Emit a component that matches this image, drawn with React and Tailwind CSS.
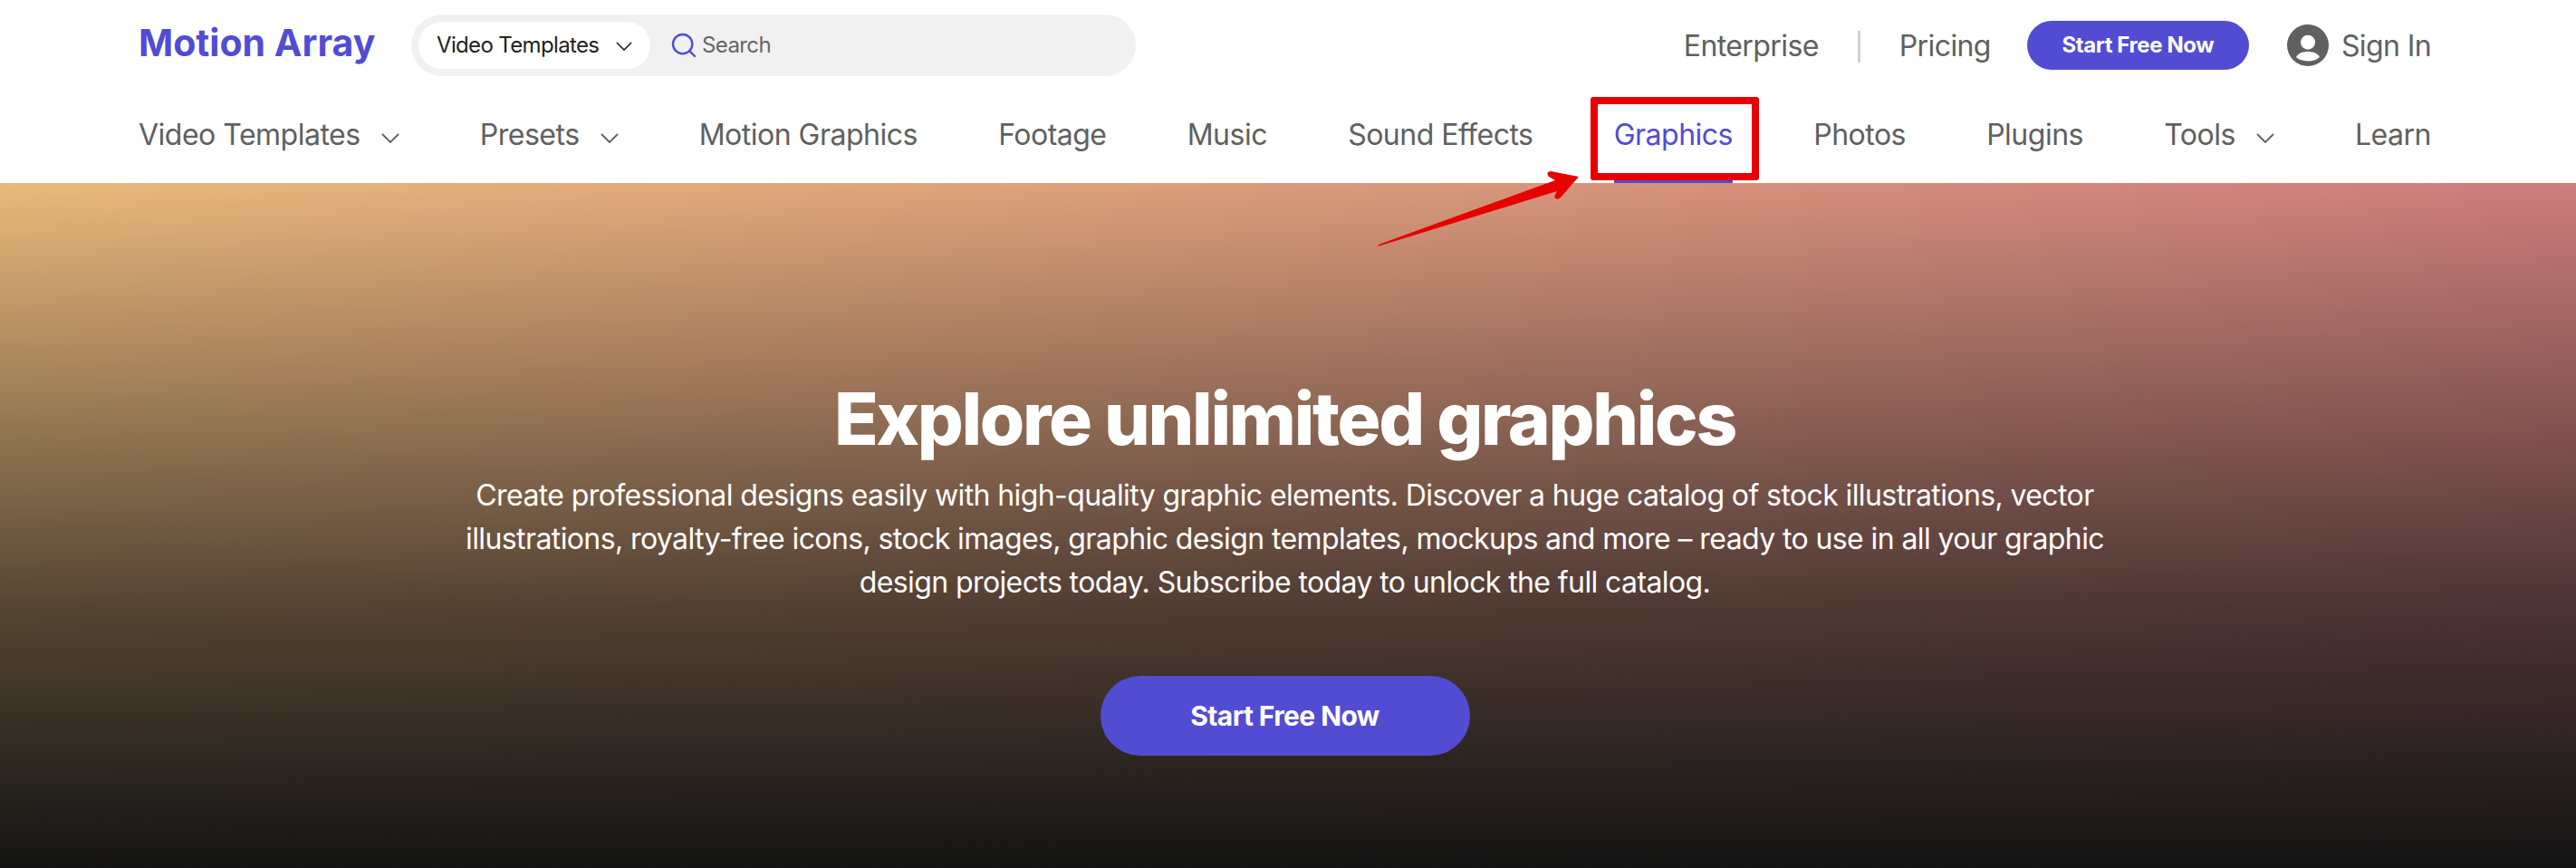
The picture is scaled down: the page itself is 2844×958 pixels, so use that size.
import { Search } from "lucide-react"

const navItems = [
  { label: "Video Templates", menu: true },
  { label: "Presets", menu: true },
  { label: "Motion Graphics" },
  { label: "Footage" },
  { label: "Music" },
  { label: "Sound Effects" },
  { label: "Graphics", active: true },
  { label: "Photos" },
  { label: "Plugins" },
  { label: "Tools", menu: true },
  { label: "Learn" },
]

const Chevron = ({ className }) => (
  <svg viewBox="0 0 20 11" fill="none" className={className}>
    <path d="M1 1l9 9 9-9" stroke="currentColor" strokeWidth="1.8" />
  </svg>
)

const UserIcon = () => (
  <svg viewBox="0 0 46 46" className="w-[46px] h-[46px]">
    <circle cx="23" cy="23" r="23" fill="#606060" />
    <circle cx="23" cy="19.7" r="8" fill="#fff" />
    <path d="M10 36C12 32 17 30 23 30S34 32 36 36C33 39 28 40.5 23 40.5S13 39 10 36Z" fill="#fff" />
  </svg>
)

const Annotation = () => (
  <>
    <div className="absolute left-[1756px] top-[107px] w-[186px] h-[92px] border-[8px] border-[#e60000] rounded-[3px]"></div>
    <svg className="absolute left-[1510px] top-[170px]" width="240" height="110" viewBox="0 0 240 110">
      <path d="M11 102L13 99.5L207 29L200 25Q196 20 202 19L233 25L213 48Q208 52 206 47L209 41Z" fill="#e60000" />
    </svg>
  </>
)

const App = () => {
  return (
    <div className="relative w-[2844px] h-[958px] overflow-hidden bg-white font-['Inter',sans-serif]">
      <header className="h-[202px] pl-[153px] pr-[160px] bg-white">
        <div className="flex items-center justify-between pt-[16px] h-[84px]">
          <div className="flex items-center">
            <span className="w-[301px] text-[41px] leading-none font-bold text-[#524cd3] -mt-[6px]">Motion Array</span>
            <div className="flex items-center w-[800px] h-[68px] pl-[8px] rounded-[34px] bg-[#f1f1f1]">
              <div className="flex items-center justify-between w-[256px] h-[52px] pl-[20px] pr-[20px] rounded-[26px] bg-white text-[24px] tracking-[-0.65px] text-[#222]">
                <span>Video Templates</span>
                <Chevron className="w-[18px] h-[10px] mt-[2px]" />
              </div>
              <Search className="ml-[21px] w-[32px] h-[32px] text-[#524cd3]" strokeWidth={1.8} />
              <span className="ml-[4px] text-[24px] tracking-[-0.6px] text-[#666]">Search</span>
            </div>
          </div>
          <div className="flex items-center pt-[2px] text-[32px] tracking-[-0.6px] text-[#606060]">
            <span>Enterprise</span>
            <span className="w-[3px] h-[35px] mx-[43px] bg-[#d0d0d0]"></span>
            <span>Pricing</span>
            <button className="ml-[40px] w-[245px] h-[54px] -mt-[2px] rounded-[27px] bg-[#524cd3] text-[24px] tracking-[-0.4px] font-bold text-white">Start Free Now</button>
            <span className="ml-[42px] mr-[14px] flex -mt-[2px]"><UserIcon /></span>
            <span>Sign In</span>
          </div>
        </div>
        <nav className="flex items-stretch justify-between h-[118px]">
          {navItems.map((item) => (
            <div
              key={item.label}
              className={`flex items-center pt-[15px] text-[32px] tracking-[-0.5px] border-b-[3px] ${
                item.active ? "text-[#524cd3] border-[#524cd3]" : "text-[#606060] border-transparent"
              }`}
            >
              <span>{item.label}</span>
              {item.menu && <Chevron className="ml-[23px] mt-[6px] w-[20px] h-[11px]" />}
            </div>
          ))}
        </nav>
      </header>

      <section className="flex flex-col items-center h-[756px] pt-[221px] pr-[7px] text-white bg-[linear-gradient(to_bottom,rgba(20,20,20,0)_0%,rgba(20,20,20,0.7)_62%,#141414_100%),linear-gradient(to_right,#eaba7c,#cc7d7c)]">
        <h1 className="text-[80px] leading-[78px] font-extrabold tracking-[-2.3px]">Explore unlimited graphics</h1>
        <p className="w-[1830px] mt-[22px] text-center text-[32px] leading-[48px] tracking-[-0.6px]">
          Create professional designs easily with high-quality graphic elements. Discover a huge catalog of stock illustrations, vector illustrations, royalty-free icons, stock images, graphic design templates, mockups and more – ready to use in all your graphic design projects today. Subscribe today to unlock the full catalog.
        </p>
        <button className="w-[408px] h-[88px] mt-[79px] rounded-[44px] bg-[#524cd3] text-[30px] tracking-[-0.6px] font-bold text-white">Start Free Now</button>
      </section>

      <Annotation />
    </div>
  )
}

export default App
